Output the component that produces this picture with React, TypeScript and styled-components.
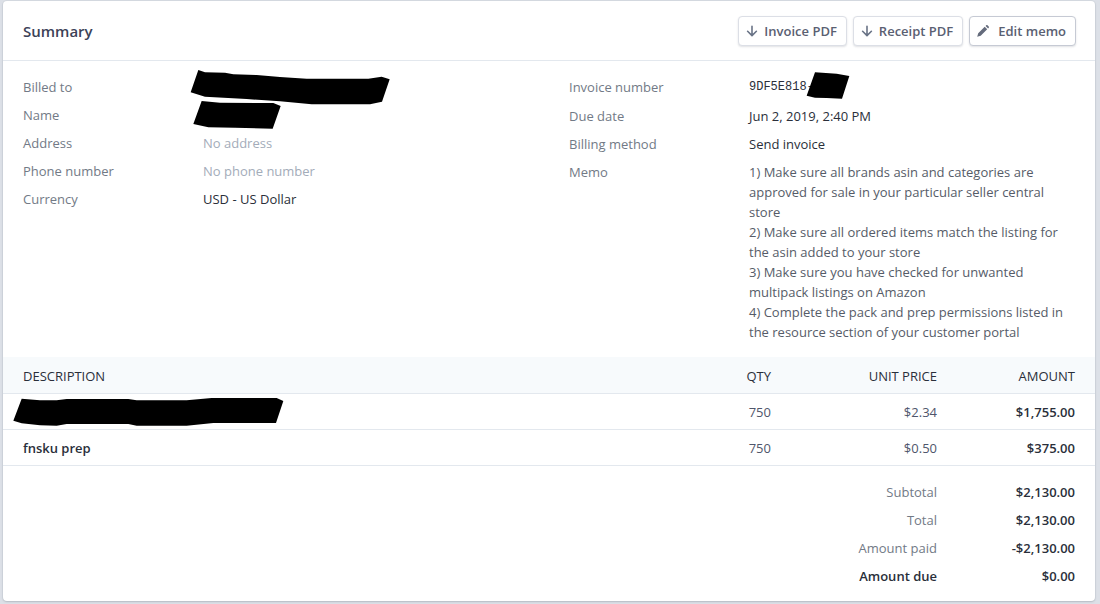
import React from 'react';
import styled, { createGlobalStyle } from 'styled-components';

const GlobalStyle = createGlobalStyle`
  * { box-sizing: border-box; }
  body {
    margin: 0;
    background: #dce0e7;
    color: #2a2f3a;
    font-family: "Open Sans", "Noto Sans", sans-serif;
    font-size: 13px;
    line-height: 20px;
  }
`;

const Page = styled.main`
  padding: 1px 5px 3px 3px;
`;

const Card = styled.section`
  background: #fff;
  border-radius: 4px;
  box-shadow: 0 0 0 1px rgba(60, 66, 87, 0.04), 0 1px 2px rgba(60, 66, 87, 0.2);
  padding-bottom: 11px;
`;

const Header = styled.header`
  display: flex;
  align-items: center;
  justify-content: space-between;
  height: 60px;
  padding: 0 19px 0 20px;
  border-bottom: 1px solid #e3e8ee;
`;

const Title = styled.h2`
  margin: 0;
  font-size: 15px;
  font-weight: 600;
  color: #3c4257;
`;

const Actions = styled.div`
  display: flex;
  gap: 6px;
`;

const ActionButton = styled.button<{ $strong?: boolean }>`
  display: flex;
  align-items: center;
  gap: ${(p) => (p.$strong ? 9 : 6)}px;
  height: 30px;
  padding: 0 9px 0 7px;
  border: 1px solid ${(p) => (p.$strong ? '#c6cad4' : '#dcdfe6')};
  border-radius: 4px;
  background: #fff;
  box-shadow: 0 1px 2px rgba(60, 66, 87, 0.16);
  color: #5a6072;
  font: inherit;
  font-weight: 600;
  cursor: pointer;
`;

const Icon = styled.svg`
  width: 12px;
  height: 12px;
  flex: none;
`;

const Details = styled.div`
  display: grid;
  grid-template-columns: 1fr 1fr;
  padding: 12px 0 11px;
`;

const DetailList = styled.dl`
  margin: 0;
  padding: 0 20px;
`;

const DetailRow = styled.div<{ $tall?: boolean }>`
  display: grid;
  grid-template-columns: 180px 1fr;
  min-height: ${(p) => (p.$tall ? 29 : 28)}px;
  padding: 4px 0;
`;

const Label = styled.dt`
  color: #727a86;
`;

const Value = styled.dd<{ $tone?: 'muted' | 'body' }>`
  position: relative;
  margin: 0;
  color: ${(p) => (p.$tone === 'muted' ? '#a3acb9' : p.$tone === 'body' ? '#565c68' : '#2a2f3a')};
  white-space: pre-line;
`;

const Code = styled.code`
  display: block;
  font-family: "Liberation Mono", "DejaVu Sans Mono", monospace;
  font-size: 12px;
`;

const Redaction = styled.svg<{ $x: number; $y: number }>`
  position: absolute;
  left: ${(p) => p.$x}px;
  top: ${(p) => p.$y}px;
  fill: #000;
`;

const Table = styled.table`
  width: 100%;
  border-collapse: separate;
  border-spacing: 0;
  table-layout: fixed;
`;

const Col = styled.col<{ $width?: number }>`
  width: ${(p) => (p.$width ? `${p.$width}px` : 'auto')};
`;

const HeadCell = styled.th<{ $start?: boolean }>`
  height: 37px;
  padding: 1px 20px 0;
  background: #f7fafc;
  border-bottom: 1px solid #e3e8ee;
  font-weight: 500;
  color: #2a2f3a;
  text-align: ${(p) => (p.$start ? 'left' : 'right')};
  text-transform: uppercase;
`;

const Cell = styled.td<{ $start?: boolean; $strong?: boolean }>`
  position: relative;
  height: 36px;
  padding: 0 20px;
  border-bottom: 1px solid #e3e8ee;
  font-weight: ${(p) => (p.$strong ? 600 : 400)};
  color: ${(p) => (p.$strong ? '#2a2f3a' : '#4f566b')};
  text-align: ${(p) => (p.$start ? 'left' : 'right')};
`;

const Spacer = styled.td`
  height: 12px;
  padding: 0;
`;

const TotalLabel = styled.th<{ $strong?: boolean }>`
  height: 28px;
  padding: 0 20px;
  font-weight: ${(p) => (p.$strong ? 600 : 400)};
  color: ${(p) => (p.$strong ? '#2a2f3a' : '#727a86')};
  text-align: right;
`;

const TotalValue = styled.td`
  height: 28px;
  padding: 0 20px;
  font-weight: 600;
  text-align: right;
`;

const DownIcon = () => (
  <Icon viewBox="0 0 12 12" fill="none" stroke="#697386" strokeWidth="1.6" strokeLinecap="round" strokeLinejoin="round" aria-hidden="true">
    <path d="M6 1.3v9M1.6 6.3 6 10.6l4.4-4.3" />
  </Icon>
);

const PencilIcon = () => (
  <Icon viewBox="0 0 12 12" fill="#646b7c" aria-hidden="true">
    <path d="M7.7 1.8 10.2 4.3 3.7 10.8.2 11.8l1-3.5zM8.6.9l.6-.6a.9.9 0 0 1 1.3 0l1.2 1.2a.9.9 0 0 1 0 1.3l-.6.6z" />
  </Icon>
);

const memo = `1) Make sure all brands asin and categories are approved for sale in your particular seller central store
2) Make sure all ordered items match the listing for the asin added to your store
3) Make sure you have checked for unwanted multipack listings on Amazon
4) Complete the pack and prep permissions listed in the resource section of your customer portal`;

const totals = [
  { label: 'Subtotal', value: '$2,130.00' },
  { label: 'Total', value: '$2,130.00' },
  { label: 'Amount paid', value: '-$2,130.00' },
  { label: 'Amount due', value: '$0.00', strong: true },
];

export default function App() {
  return (
    <Page>
      <GlobalStyle />
      <Card>
        <Header>
          <Title>Summary</Title>
          <Actions>
            <ActionButton type="button"><DownIcon />Invoice PDF</ActionButton>
            <ActionButton type="button"><DownIcon />Receipt PDF</ActionButton>
            <ActionButton type="button" $strong><PencilIcon />Edit memo</ActionButton>
          </Actions>
        </Header>
        <Details>
          <DetailList>
            <DetailRow>
              <Label>Billed to</Label>
              <Value>
                <Redaction $x={-13} $y={-8} width="201" height="36" viewBox="30 27 603 108" aria-hidden="true">
                  <path d="M55 30 75 37 135 38 160 43 230 45 300 51 380 56H565L605 50 629 58 606 125 570 133H395L300 124 200 117 75 110 32 97Z" />
                </Redaction>
              </Value>
            </DetailRow>
            <DetailRow>
              <Label>Name</Label>
              <Value>
                <Redaction $x={-10} $y={-5} width="88" height="30" viewBox="39 120 264 90" aria-hidden="true">
                  <path d="M65 123 120 128 280 129 302 138 278 206 165 203 85 202 40 192Z" />
                </Redaction>
              </Value>
            </DetailRow>
            <DetailRow>
              <Label>Address</Label>
              <Value $tone="muted">No address</Value>
            </DetailRow>
            <DetailRow>
              <Label>Phone number</Label>
              <Value $tone="muted">No phone number</Value>
            </DetailRow>
            <DetailRow>
              <Label>Currency</Label>
              <Value>USD - US Dollar</Value>
            </DetailRow>
          </DetailList>
          <DetailList>
            <DetailRow $tall>
              <Label>Invoice number</Label>
              <Value>
                <Code>9DF5E818-</Code>
                <Redaction $x={57} $y={-6} width="44" height="30" viewBox="738 3 132 90" aria-hidden="true">
                  <path d="M765 7 830 11 868 18 846 86 800 84 765 83 740 77Z" />
                </Redaction>
              </Value>
            </DetailRow>
            <DetailRow>
              <Label>Due date</Label>
              <Value>Jun 2, 2019, 2:40 PM</Value>
            </DetailRow>
            <DetailRow>
              <Label>Billing method</Label>
              <Value>Send invoice</Value>
            </DetailRow>
            <DetailRow>
              <Label>Memo</Label>
              <Value $tone="body">{memo}</Value>
            </DetailRow>
          </DetailList>
        </Details>
        <Table>
          <colgroup>
            <Col />
            <Col $width={160} />
            <Col $width={166} />
            <Col $width={138} />
          </colgroup>
          <thead>
            <tr>
              <HeadCell scope="col" $start>Description</HeadCell>
              <HeadCell scope="col">Qty</HeadCell>
              <HeadCell scope="col">Unit price</HeadCell>
              <HeadCell scope="col">Amount</HeadCell>
            </tr>
          </thead>
          <tbody>
            <tr>
              <Cell $start $strong>
                <Redaction $x={10} $y={3} width="271" height="30" viewBox="39 141 813 90" aria-hidden="true">
                  <path d="M65 146 120 151H170L200 147H385L410 151H560L635 144H830L850 153 828 219H640L560 227H410L385 222H200L170 227 120 226 65 220 40 212Z" />
                </Redaction>
              </Cell>
              <Cell>750</Cell>
              <Cell>$2.34</Cell>
              <Cell $strong>$1,755.00</Cell>
            </tr>
            <tr>
              <Cell $start $strong>fnsku prep</Cell>
              <Cell>750</Cell>
              <Cell>$0.50</Cell>
              <Cell $strong>$375.00</Cell>
            </tr>
          </tbody>
          <tfoot>
            <tr><Spacer colSpan={4} /></tr>
            {totals.map((t) => (
              <tr key={t.label}>
                <TotalLabel scope="row" colSpan={3} $strong={t.strong}>{t.label}</TotalLabel>
                <TotalValue>{t.value}</TotalValue>
              </tr>
            ))}
          </tfoot>
        </Table>
      </Card>
    </Page>
  );
}
